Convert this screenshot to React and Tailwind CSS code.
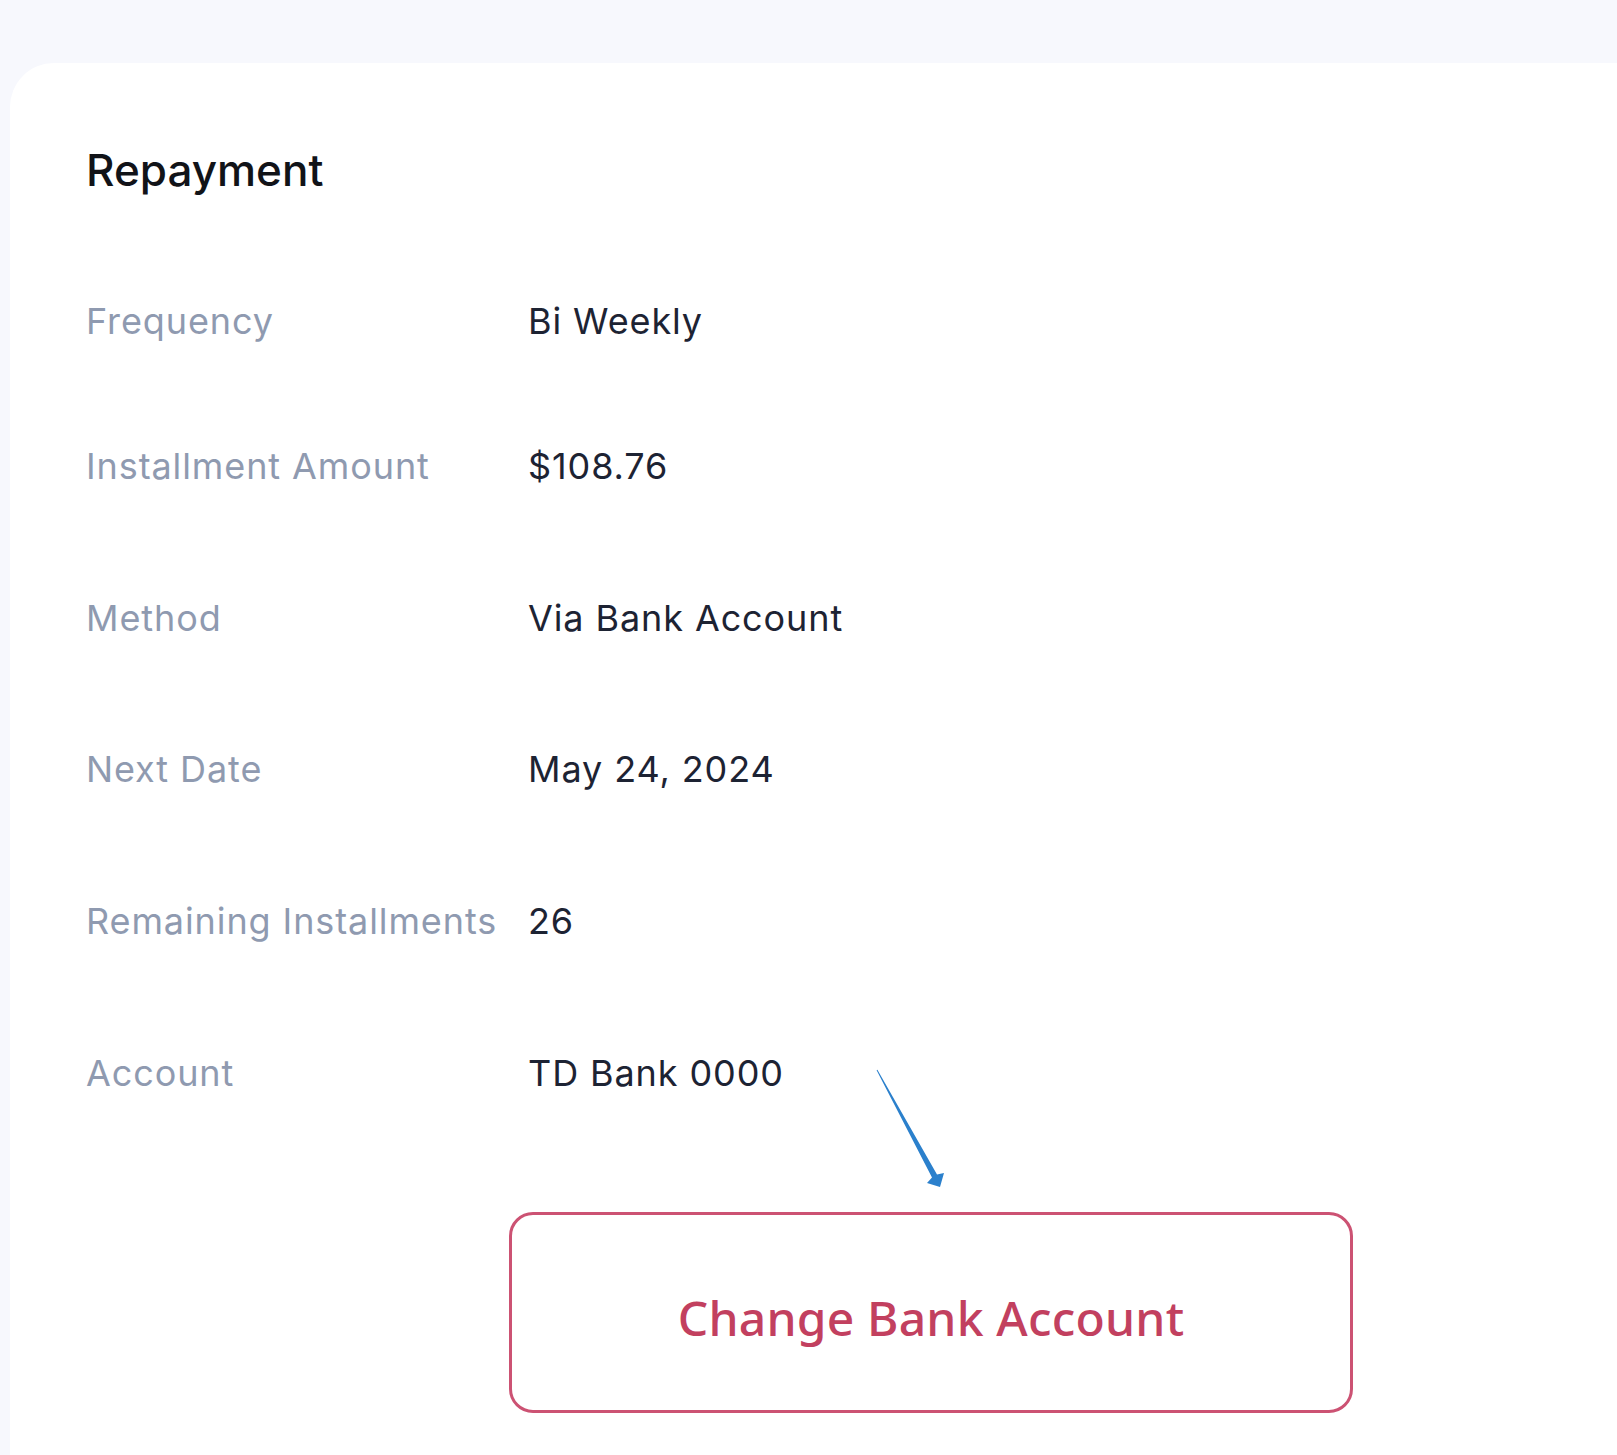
import React from "react";

const ROWS = [
  ["Frequency", "Bi Weekly"],
  ["Installment Amount", "$108.76"],
  ["Method", "Via Bank Account"],
  ["Next Date", "May 24, 2024"],
  ["Remaining Installments", "26"],
  ["Account", "TD Bank 0000"],
];

function Arrow() {
  return (
    <svg
      className="absolute left-[860px] top-[1060px]"
      width="100"
      height="140"
      viewBox="0 0 100 140"
    >
      <polygon
        points="16.6,10.2 17.4,9.8 77,114.5 84,113 80,127 67,123 72,117.5"
        fill="#2b80cc"
      />
    </svg>
  );
}

export default function App() {
  return (
    <div className="relative min-h-screen bg-[#f7f8fd] pt-[63px] pl-[10px] font-['Inter',sans-serif]">
      <div className="min-h-[1392px] bg-white rounded-tl-[44px] pl-[76px] pt-[85px]">
        <h2 className="text-[44px] leading-[44px] font-medium text-[#111318]">
          Repayment
        </h2>

        {/* detail rows */}
        <div className="mt-[60px] flex flex-col">
          {ROWS.map(([label, value], i) => (
            <div
              key={label}
              className={`flex items-center ${i === 0 ? "h-[138px]" : "h-[151.7px]"}`}
            >
              <span className="w-[442px] text-[36px] tracking-[0.9px] text-[#8f9ab0]">{label}</span>
              <span className="text-[36px] tracking-[0.9px] text-[#1d2333]">{value}</span>
            </div>
          ))}
        </div>

        <button className="mt-[64px] ml-[423px] w-[844px] h-[201px] rounded-[24px] border-[3px] border-[#cc5273] flex items-center justify-center bg-white pt-[10px]">
          <span className="font-['Noto_Sans',sans-serif] text-[48px] tracking-[0.2px] font-medium text-[#c2405f]">
            Change Bank Account
          </span>
        </button>
      </div>
      <Arrow />
    </div>
  );
}
